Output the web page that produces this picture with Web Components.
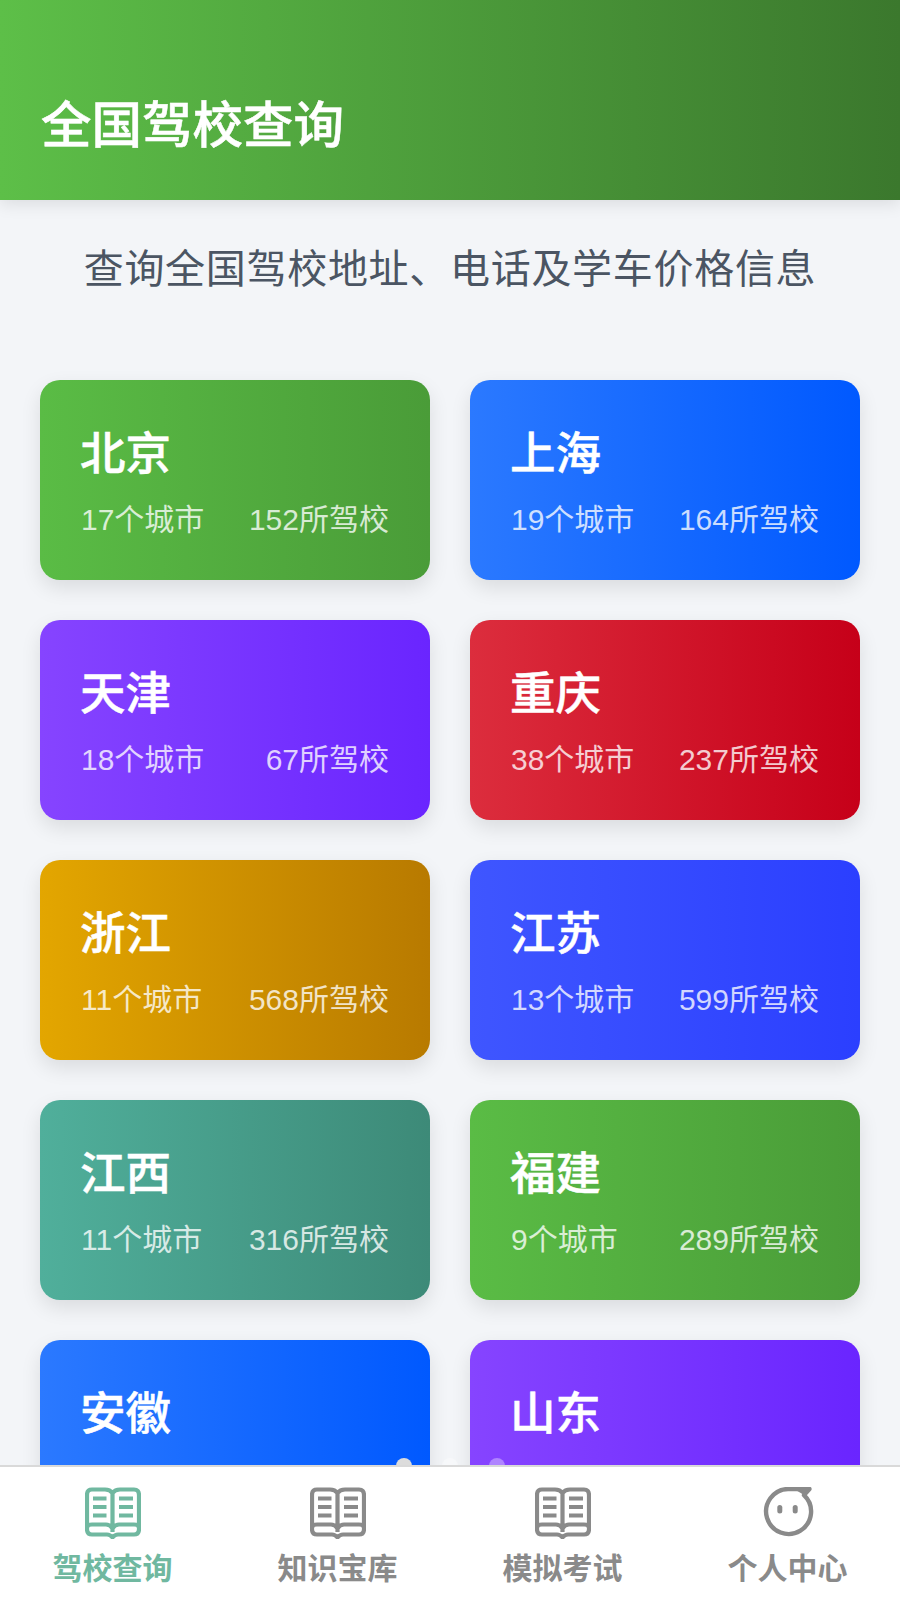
<!doctype html>
<html lang="zh-CN"><head><meta charset="utf-8"><title>全国驾校查询</title>
<style>
html,body{margin:0;padding:0;height:100%;background:#f3f5f8;font-family:"Liberation Sans","Noto Sans CJK SC",sans-serif}
</style></head><body>
<app-shell>
  <page-header>全国驾校查询</page-header>
  <page-intro>查询全国驾校地址、电话及学车价格信息</page-intro>
  <region-grid>
    <region-card tone="green" cities="17个城市" schools="152所驾校">北京</region-card>
    <region-card tone="blue" cities="19个城市" schools="164所驾校">上海</region-card>
    <region-card tone="purple" cities="18个城市" schools="67所驾校">天津</region-card>
    <region-card tone="red" cities="38个城市" schools="237所驾校">重庆</region-card>
    <region-card tone="amber" cities="11个城市" schools="568所驾校">浙江</region-card>
    <region-card tone="indigo" cities="13个城市" schools="599所驾校">江苏</region-card>
    <region-card tone="teal" cities="11个城市" schools="316所驾校">江西</region-card>
    <region-card tone="green" cities="9个城市" schools="289所驾校">福建</region-card>
    <region-card tone="blue" cities="" schools="">安徽</region-card>
    <region-card tone="purple" cities="" schools="">山东</region-card>
  </region-grid>
  <page-dots slot="dots"></page-dots>
  <tab-bar slot="nav">
    <tab-item icon="book" active>驾校查询</tab-item>
    <tab-item icon="book">知识宝库</tab-item>
    <tab-item icon="book">模拟考试</tab-item>
    <tab-item icon="face">个人中心</tab-item>
  </tab-bar>
</app-shell>
<script>
function def(name, css, html, extra){
  customElements.define(name, class extends HTMLElement{
    constructor(){super();this.attachShadow({mode:'open'}).innerHTML='<style>'+css+'</style>'+html;}
    connectedCallback(){ if(extra) extra(this); }
  });
}
def('app-shell',`
 :host{display:flex;flex-direction:column;height:1600px;width:900px;overflow:hidden;position:relative;background:#f3f5f8}
 main{flex:1;min-height:0;overflow:hidden}
 .dots{position:absolute;left:0;right:0;bottom:135px;height:0}
`,`<main><slot></slot></main><div class="dots"><slot name="dots"></slot></div><slot name="nav"></slot>`);
def('page-header',`
 :host{display:flex;align-items:flex-end;box-sizing:border-box;height:200px;padding:0 41px 37px;color:#fff;
  background:linear-gradient(90deg,#5dbf48 0%,#3b782d 100%);box-shadow:0 4px 16px rgba(0,0,0,.1);position:relative;
  font-size:50.500px;line-height:74px;font-weight:500;-webkit-text-stroke:.5px #fff}
`,`<slot></slot>`);
def('page-intro',`
 :host{display:block;padding:41px 0 83px;text-align:center;color:#4b5563;font-size:40px;line-height:56px;letter-spacing:.7px}
`,`<slot></slot>`);
def('region-grid',`
 :host{display:grid;grid-template-columns:1fr 1fr;gap:40px;padding:0 40px}
`,`<slot></slot>`);
const tones={green:['#5abc45','#4a9c38'],blue:['#2b79ff','#0059ff'],purple:['#8644ff','#6a25ff'],red:['#dc2d3d','#c60019'],
 amber:['#e3a600','#b87a00'],indigo:['#3f56ff','#2b3fff'],teal:['#50af9b','#3d8a78']};
def('region-card',`
 :host{display:block;box-sizing:border-box;height:200px;padding:42px 41px 38px 41px;border-radius:20px;color:#fff;
  background:linear-gradient(90deg,var(--a),var(--b));box-shadow:0 8px 20px rgba(0,0,0,.1)}
 .t{margin-left:-1px;font-size:45.500px;line-height:66px;font-weight:500;-webkit-text-stroke:.5px #fff}
 .s{display:flex;justify-content:space-between;margin-top:10px;font-size:30px;line-height:44px;color:rgba(255,255,255,.78)}
`,`<div class="t"><slot></slot></div><div class="s"><span id="c"></span><span id="n"></span></div>`,el=>{
  const t=tones[el.getAttribute('tone')];el.style.setProperty('--a',t[0]);el.style.setProperty('--b',t[1]);
  el.shadowRoot.getElementById('c').textContent=el.getAttribute('cities');
  el.shadowRoot.getElementById('n').textContent=el.getAttribute('schools');
});
def('page-dots',`
 :host{display:flex;justify-content:center;gap:30.500px;position:absolute;left:0;right:0;top:-7px}
 i{width:16px;height:16px;border-radius:50%;background:rgba(255,255,255,.35)}
 i:first-child{background:#f0f5ff}
 i:nth-child(2){background:#dcdcdc}
`,`<i></i><i></i><i></i>`);
def('tab-bar',`
 :host{display:grid;grid-template-columns:repeat(4,1fr);box-sizing:border-box;height:135px;flex:none;background:#fff;
  border-top:2px solid #d9d9d9;padding-top:20px;position:relative;z-index:1}
`,`<slot></slot>`);
const icons={
 book:`<path d="M27.500 6Q25 2.500 20 2.500H7Q2 2.500 2 8V42Q2 47.500 7 47.500H22Q25 47.500 27.500 50.500Q30 47.500 33 47.500H49Q54 47.500 54 42V8Q54 2.500 49 2.500H35Q30 2.500 27.500 6ZM27.500 6V45M2 41Q2 37.500 7 37.500H21Q25 37.500 27.500 41.500Q30 37.500 34 37.500H49Q54 37.500 54 41" fill="none" stroke="currentColor" stroke-width="4.200" stroke-linejoin="round"/><path d="M8 11.500H21.500M8 20H21.500M8 28.500H21.500M34 11.500H48M34 20H48M34 28.500H48" fill="none" stroke="currentColor" stroke-width="4"/>`,
 face:`<path d="M28 2H49.500L44 8.100A22.500 22.500 0 1 1 28 2Z" fill="none" stroke="currentColor" stroke-width="4.400" stroke-linejoin="round"/><path d="M34 2H49.500L44 8.100Z" fill="currentColor"/><rect x="17.300" y="18" width="5" height="8.500" rx="2.500" fill="currentColor"/><rect x="32.700" y="18" width="5" height="8.500" rx="2.500" fill="currentColor"/>`
};
def('tab-item',`
 :host{display:flex;flex-direction:column;align-items:center;color:#8a8a8a}
 :host([active]){color:#70b8a0}
 svg{width:56px;height:52px;display:block}
 span{margin-top:8px;font-size:30px;line-height:44px;font-weight:700}
`,`<svg viewBox="0 0 56 52" id="i" aria-hidden="true"></svg><span><slot></slot></span>`,el=>{
  el.shadowRoot.getElementById('i').innerHTML=icons[el.getAttribute('icon')];
});
</script>
</body></html>
